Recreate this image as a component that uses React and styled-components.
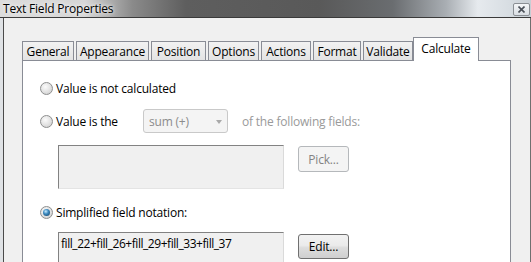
import React from 'react';
import styled, { createGlobalStyle } from 'styled-components';

const GlobalStyle = createGlobalStyle`
  html, body {
    margin: 0;
    padding: 0;
    background: #f0f0f0;
  }
  body {
    font-family: "Open Sans", "Noto Sans", sans-serif;
    font-size: 12px;
    letter-spacing: -0.2px;
    color: #000;
  }
`;

const Window = styled.div`
  width: 531px;
  height: 262px;
  overflow: hidden;
  display: flex;
  flex-direction: column;
  background: #dfe2e5;
`;

const TitleBar = styled.div`
  height: 17px;
  flex: none;
  display: flex;
  align-items: center;
  justify-content: space-between;
  padding: 0 1px 0 3px;
  border-bottom: 1px solid #3a3a3a;
  background: linear-gradient(
    90deg,
    #dcdcdc 0%,
    #d6d6d6 16%,
    #8a8a8a 25%,
    #5e5e5e 35%,
    #595959 60%,
    #6a6d70 74%,
    #a9aeb3 84%,
    #e6eaee 90%,
    #d7dde2 96%,
    #c7ced4 100%
  );
`;

const Title = styled.span`
  font-size: 12px;
  line-height: 17px;
  color: #000;
  text-shadow: 0 0 6px #f4f4f4, 0 0 3px #f4f4f4;
`;

const CloseButton = styled.div`
  width: 15px;
  height: 11px;
  margin-top: 1px;
  display: flex;
  align-items: center;
  justify-content: center;
  border: 1px solid #8a8f94;
  border-radius: 2px;
  background: linear-gradient(#f4f6f8, #d9dee3);
`;

const Body = styled.div`
  flex: 1;
  display: flex;
  flex-direction: column;
  margin-left: 3px;
  padding: 19px 19px 0 18px;
  border-left: 1px solid #4a4a4a;
  border-right: 1px solid #6f6f6f;
  background: #f0f0f0;
`;

const TabStrip = styled.div`
  display: flex;
  align-items: flex-end;
  gap: 2px;
  position: relative;
  z-index: 1;
  margin-bottom: -1px;
`;

const Tab = styled.div`
  box-sizing: border-box;
  width: ${(p) => p.$w}px;
  height: ${(p) => (p.$active ? 24 : 20)}px;
  margin-left: ${(p) => (p.$active ? -2 : 0)}px;
  display: flex;
  align-items: center;
  justify-content: center;
  border: 1px solid #898c95;
  border-bottom: ${(p) => (p.$active ? 'none' : '1px solid #898c95')};
  padding-bottom: ${(p) => (p.$active ? 3 : 0)}px;
  background: ${(p) => (p.$active ? '#fff' : 'linear-gradient(#f2f2f2, #e3e3e3)')};
  white-space: nowrap;
`;

const Panel = styled.div`
  flex: 1;
  display: flex;
  flex-direction: column;
  padding: 17px 0 0 17px;
  border: 1px solid #898c95;
  border-bottom: none;
  background: #fff;
`;

const Row = styled.div`
  display: flex;
  align-items: ${(p) => p.$align || 'center'};
  height: ${(p) => p.$h}px;
  margin-top: ${(p) => p.$mt || 0}px;
  padding-left: ${(p) => p.$indent || 0}px;
`;

const Radio = styled.span`
  box-sizing: border-box;
  width: 13px;
  height: 13px;
  flex: none;
  border-radius: 50%;
  border: 1px solid #8e8f8f;
  display: flex;
  align-items: center;
  justify-content: center;
  background: radial-gradient(circle at 40% 35%, #fbfbfb 0%, #e6e6e6 45%, #c9c9c9 100%);
  &::after {
    content: '';
    display: ${(p) => (p.$checked ? 'block' : 'none')};
    width: 7px;
    height: 7px;
    border-radius: 50%;
    background: radial-gradient(circle at 40% 35%, #c9ecff 0%, #3c8ac0 40%, #113a5c 100%);
  }
`;

const Label = styled.span`
  margin-left: 3px;
  width: ${(p) => (p.$w ? `${p.$w}px` : 'auto')};
  flex: none;
  color: #000;
  white-space: nowrap;
`;

const Select = styled.div`
  box-sizing: border-box;
  width: 85px;
  height: 24px;
  display: flex;
  align-items: center;
  justify-content: space-between;
  padding: 0 5px 0 5px;
  border: 1px solid #c9c9c9;
  border-radius: 3px;
  background: #f4f4f4;
  color: #8c8c8c;
`;

const Arrow = styled.span`
  width: 0;
  height: 0;
  margin-top: 2px;
  border-left: 3.5px solid transparent;
  border-right: 3.5px solid transparent;
  border-top: 4px solid #a9a9a9;
`;

const Trailing = styled.span`
  margin-left: 14px;
  color: #9a9a9a;
  white-space: nowrap;
`;

const FieldBox = styled.div`
  box-sizing: border-box;
  width: 226px;
  height: 44px;
  flex: none;
  padding: 2px 2px;
  background: #f0f0f0;
  border-top: 1px solid #828282;
  border-left: 1px solid #828282;
  border-right: 1px solid #dadada;
  border-bottom: 1px solid #e4e4e4;
  color: #000;
  letter-spacing: -0.45px;
  white-space: nowrap;
`;

const Button = styled.div`
  box-sizing: border-box;
  width: 51px;
  height: ${(p) => (p.$disabled ? 26 : 25)}px;
  margin-left: 14px;
  margin-top: ${(p) => p.$mt || 0}px;
  flex: none;
  display: flex;
  align-items: center;
  justify-content: center;
  border-radius: 3px;
  border: 1px solid ${(p) => (p.$disabled ? '#b5b8bb' : '#707070')};
  background: ${(p) =>
    p.$disabled ? '#f4f4f4' : 'linear-gradient(#f2f2f2 0%, #ebebeb 45%, #dddddd 55%, #cfcfcf 100%)'};
  color: ${(p) => (p.$disabled ? '#838383' : '#000')};
`;

const tabs = [
  { label: 'General', w: 52 },
  { label: 'Appearance', w: 73 },
  { label: 'Position', w: 55 },
  { label: 'Options', w: 51 },
  { label: 'Actions', w: 50 },
  { label: 'Format', w: 48 },
  { label: 'Validate', w: 50 },
  { label: 'Calculate', w: 66, active: true },
];

export default function App() {
  return (
    <>
      <GlobalStyle />
      <Window>
        <TitleBar>
          <Title>Text Field Properties</Title>
          <CloseButton>
            <svg width="7" height="7" viewBox="0 0 7 7">
              <path d="M0.5 0.5 L6.5 6.5 M6.5 0.5 L0.5 6.5" stroke="#4a5058" strokeWidth="1.6" />
            </svg>
          </CloseButton>
        </TitleBar>
        <Body>
          <TabStrip>
            {tabs.map((t) => (
              <Tab key={t.label} $w={t.w} $active={t.active}>
                {t.label}
              </Tab>
            ))}
          </TabStrip>
          <Panel>
            <Row $h={20}>
              <Radio />
              <Label>Value is not calculated</Label>
            </Row>
            <Row $h={24} $mt={11}>
              <Radio />
              <Label $w={87}>Value is the</Label>
              <Select>
                sum (+)
                <Arrow />
              </Select>
              <Trailing>of the following fields:</Trailing>
            </Row>
            <Row $h={44} $mt={12} $align="flex-start" $indent={18}>
              <FieldBox />
              <Button $disabled $mt={1}>Pick...</Button>
            </Row>
            <Row $h={20} $mt={13}>
              <Radio $checked />
              <Label>Simplified field notation:</Label>
            </Row>
            <Row $h={44} $mt={10} $align="flex-start" $indent={18}>
              <FieldBox>fill_22+fill_26+fill_29+fill_33+fill_37</FieldBox>
              <Button $mt={2}>Edit...</Button>
            </Row>
          </Panel>
        </Body>
      </Window>
    </>
  );
}
